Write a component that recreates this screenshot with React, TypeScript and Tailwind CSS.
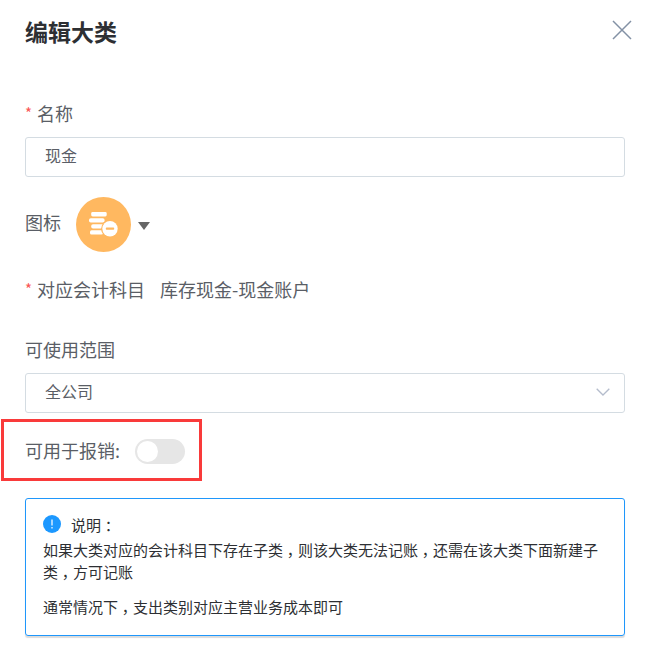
import type { ReactNode } from "react";

function Label({ required, children }: { required?: boolean; children: ReactNode }) {
  return (
    <label className="flex h-6 items-center text-[18px] leading-6 whitespace-nowrap">
      {required && <span className="w-3 text-[15px] text-[#fa5555]">*</span>}
      <span>{children}</span>
    </label>
  );
}

/** Full-width punctuation, centred in its cell. */
function Punct({ children }: { children: ReactNode }) {
  return (
    <span className="inline-block w-[15px] text-center [font-feature-settings:'halt']">{children}</span>
  );
}

function CoinsIcon() {
  return (
    <svg width="55" height="55" viewBox="0 0 55 55" aria-hidden="true">
      <circle cx="27.5" cy="27.5" r="27.5" fill="#ffb860" />
      <g fill="#fff">
        <rect x="15.2" y="15" width="15.5" height="4.4" rx="1.4" />
        <rect x="13" y="21.2" width="15.6" height="4.4" rx="1.8" />
        <rect x="15.2" y="27.2" width="14" height="4.4" rx="1.8" />
        <rect x="14" y="33.2" width="13" height="4.4" rx="1.6" />
      </g>
      <circle cx="34" cy="31.8" r="8.9" fill="#ffb860" />
      <circle cx="34" cy="31.8" r="7.7" fill="#fff" />
      <rect x="29.8" y="30.6" width="8.4" height="2.2" rx="0.8" fill="#ffb860" />
    </svg>
  );
}

export default function App() {
  return (
    <main className="flex h-[659px] w-[657px] flex-col overflow-hidden bg-white font-['Noto_Sans_CJK_SC',sans-serif] text-[#5a5e66]">
      <header className="flex h-[60px] items-center justify-between pt-[3px] pr-[25px] pb-[2px] pl-[25px]">
        <h1 className="text-[23px] leading-8 font-bold text-[#2d2f33]">编辑大类</h1>
        <button aria-label="关闭" className="-mt-px">
          <svg width="20" height="20" viewBox="0 0 20 20" stroke="#8391a5" strokeWidth="1.5" fill="none">
            <path d="M1 1 19 19M19 1 1 19" />
          </svg>
        </button>
      </header>

      <section className="flex flex-col pt-[41px] pr-8 pl-[25px]">
        <Label required>名称</Label>
        <div className="mt-3 flex h-10 items-center rounded-[3px] border border-[#d4dce2] pb-1 pl-[19px] text-[16px]">
          现金
        </div>
      </section>

      <section className="mt-5 flex h-[55px] items-center pl-[25px]">
        <div className="-mt-[6px]"><Label>图标</Label></div>
        <div className="ml-[15px]"><CoinsIcon /></div>
        <svg className="mt-[2px] ml-[7px]" width="12" height="8" viewBox="0 0 12 8" fill="#666">
          <path d="M0 0h12L6 8z" />
        </svg>
      </section>

      <section className="mt-[25px] flex pl-[25px]">
        <Label required>对应会计科目</Label>
        <span className="ml-[15px] text-[18px] leading-6">库存现金-现金账户</span>
      </section>

      <section className="mt-9 flex flex-col pr-8 pl-[25px]">
        <Label>可使用范围</Label>
        <div className="mt-3 flex h-10 items-center justify-between rounded-[3px] border border-[#d4dce2] pr-[14px] pb-1 pl-[19px] text-[16px]">
          全公司
          <svg className="mt-[2px]" width="14" height="8" viewBox="0 0 14 8" stroke="#b4bccc" strokeWidth="1.3" fill="none">
            <path d="M.7.7 7 7 13.3.7" />
          </svg>
        </div>
      </section>

      <section className="mt-[6px] ml-px flex h-[62px] w-[201px] items-center gap-[15px] border-[3px] border-[#f93a3a] pl-[21px]">
        <Label>可用于报销:</Label>
        <button role="switch" aria-checked="false" aria-label="可用于报销" className="mt-[3px] flex h-[25px] w-[50px] items-center rounded-full bg-[#e6e6e6] pl-0.5">
          <span className="size-[21px] rounded-full bg-white" />
        </button>
      </section>

      <section className="mt-[17px] mr-8 ml-[25px] h-[138px] rounded-[3px] border border-[#1f97fb] pt-[15px] pl-[17px] text-[15px] leading-[22px] text-[#2d2f33] shadow-[0_2px_1px_rgba(0,0,0,0.14)]">
        <div className="flex h-[25px] items-center whitespace-nowrap">
          <svg className="-mt-[6px]" width="18" height="18" viewBox="0 0 18 18" aria-hidden="true">
            <circle cx="9" cy="9" r="9" fill="#1c98ff" />
            <path d="M9 4.5v6" stroke="#d5ebff" strokeWidth="1.5" />
            <path d="M9 12v1.5" stroke="#d5ebff" strokeWidth="1.5" />
          </svg>
          <span className="-mt-[4px] ml-[10px]">说明<Punct>：</Punct></span>
        </div>
        <p className="whitespace-nowrap">
          如果大类对应的会计科目下存在子类<Punct>，</Punct>则该大类无法记账<Punct>，</Punct>还需在该大类下面新建子
          <br />
          类<Punct>，</Punct>方可记账
        </p>
        <p className="mt-[13px] whitespace-nowrap">
          通常情况下<Punct>，</Punct>支出类别对应主营业务成本即可
        </p>
      </section>
    </main>
  );
}
